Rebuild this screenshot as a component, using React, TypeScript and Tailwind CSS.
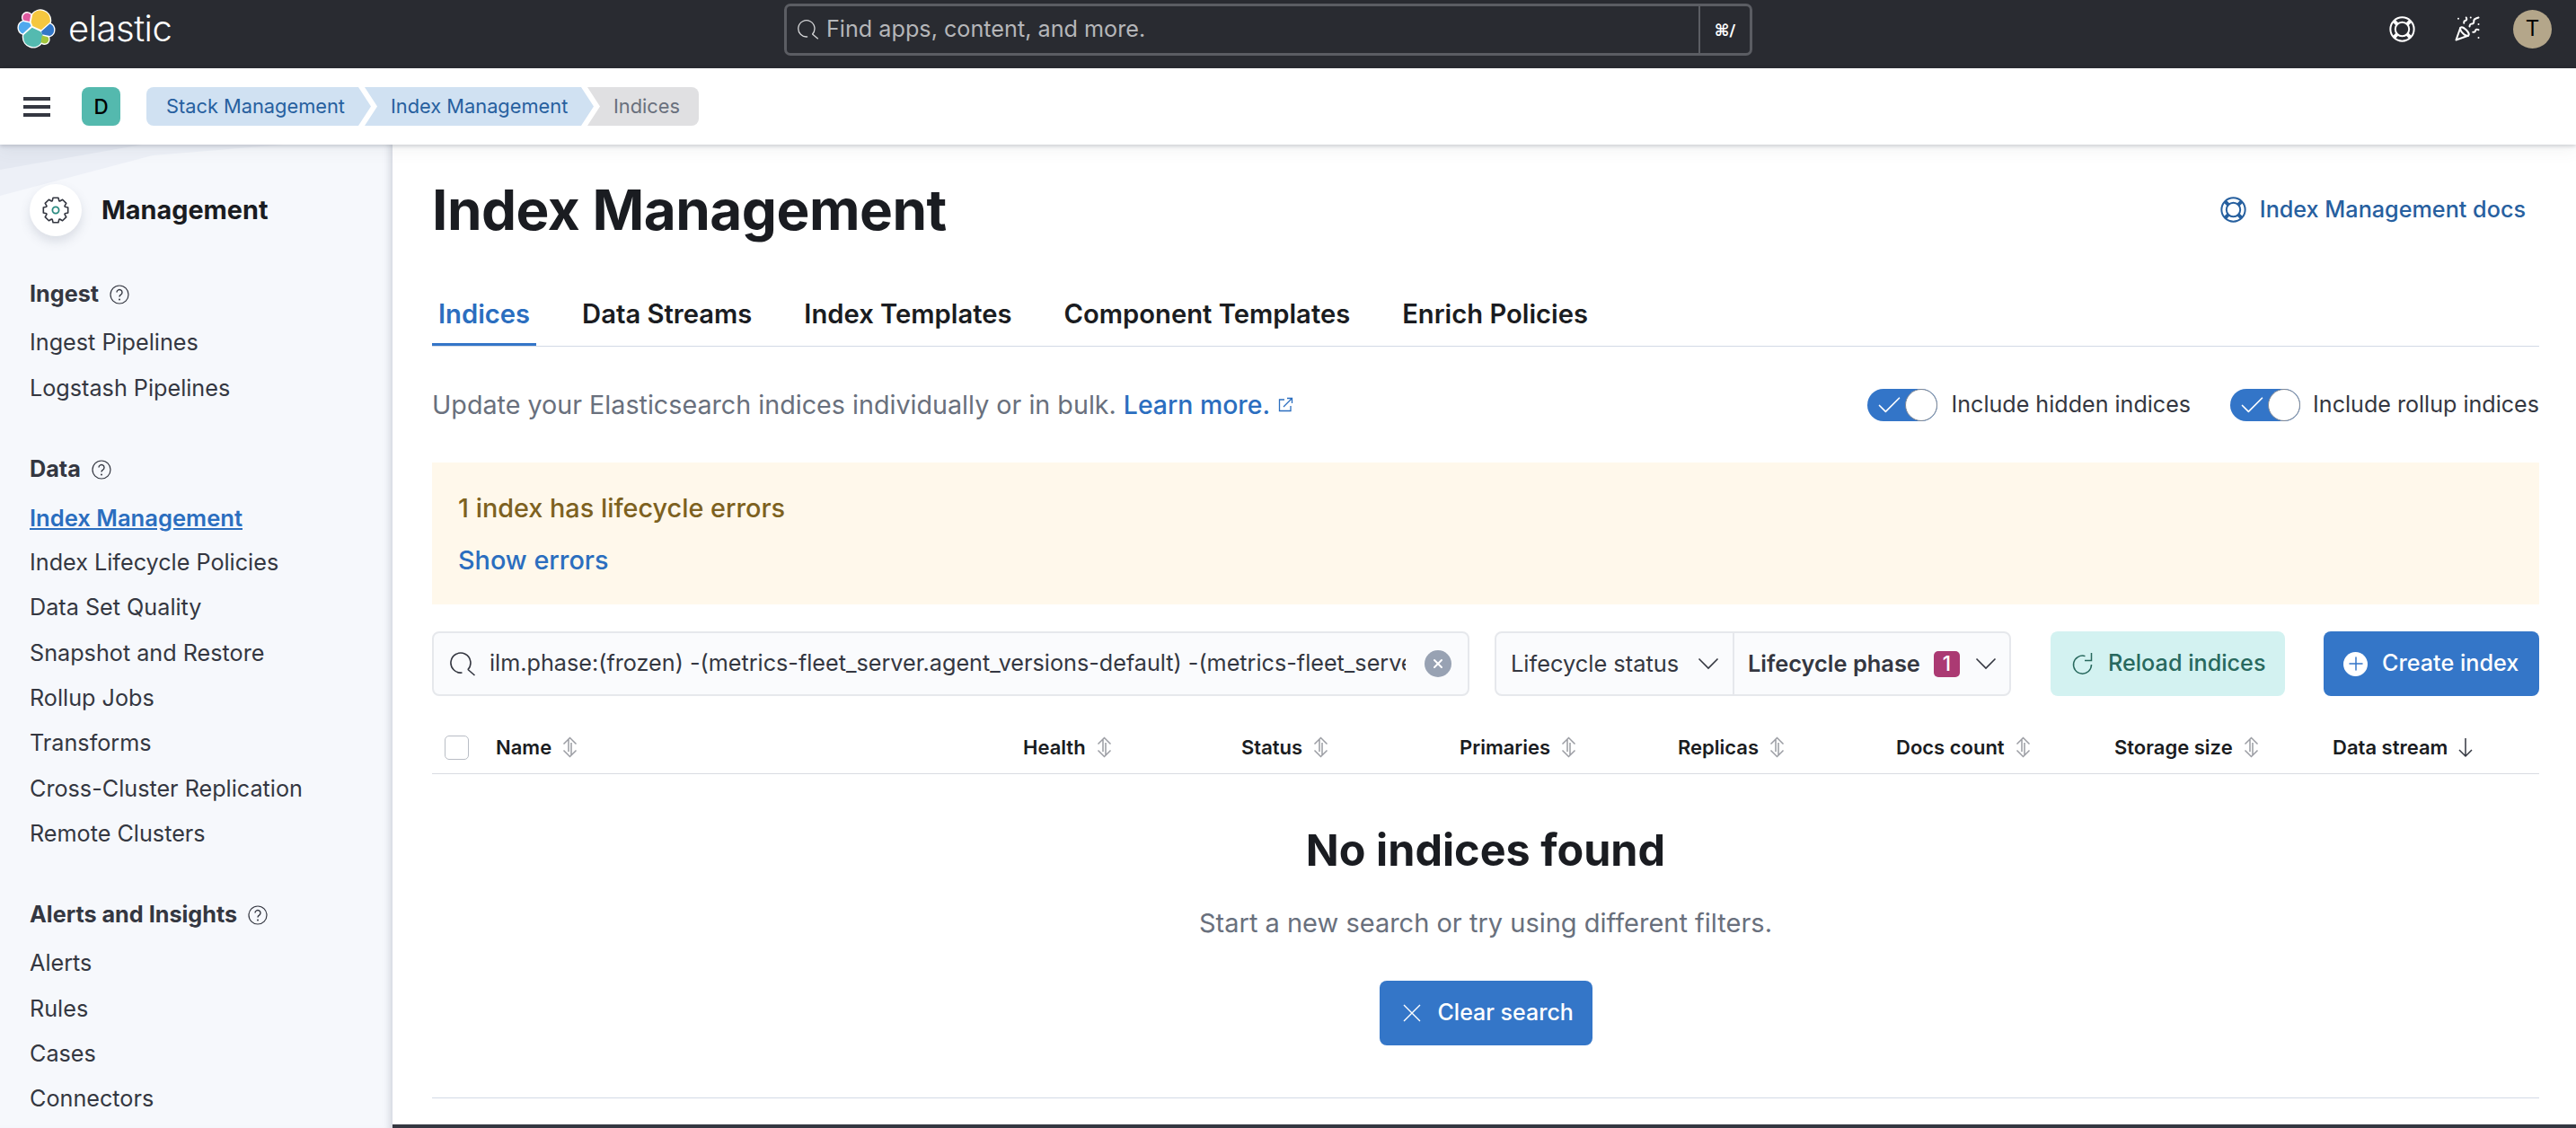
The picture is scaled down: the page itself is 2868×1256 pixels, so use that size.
import { Check, PartyPopper, Plus, X } from "lucide-react";

const inter = "font-['Inter',sans-serif]";

function ElasticLogo() {
	const parts = [
		{ c: "#f5c73f", d: "M12.57 13.735l7.01 3.196 7.073-6.197a7.877 7.877 0 0 0 .152-1.56 7.918 7.918 0 0 0-14.297-4.7l-1.177 6.09 1.239 3.17z" },
		{ c: "#54bab0", d: "M5.32 21.151a7.95 7.95 0 0 0-.157 1.577 7.936 7.936 0 0 0 14.38 4.62l1.165-6.08-1.557-2.977-7.037-3.207-6.794 6.067z" },
		{ c: "#de5a9f", d: "M5.278 9.032l4.8 1.134 1.05-5.457a3.38 3.38 0 0 0-5.85 4.323z" },
		{ c: "#4fa9ee", d: "M4.862 10.176c-2.11.699-3.574 2.72-3.574 4.947 0 2.17 1.34 4.107 3.352 4.872l6.738-6.09-1.237-2.64-5.279-1.089z" },
		{ c: "#a3c63d", d: "M20.24 27.333a3.35 3.35 0 0 0 2.038.689 3.38 3.38 0 0 0 3.377-3.379c0-.747-.243-1.44-.655-2.004l-4.79-1.12-.97 5.814z" },
		{ c: "#3277c8", d: "M21.216 20.638l5.274 1.23a5.23 5.23 0 0 0 3.416-4.904 5.24 5.24 0 0 0-3.37-4.891l-6.897 6.042.577 2.523z" },
	];
	return (
		<svg viewBox="0 0 32 32" className="h-[44px] w-[44px] shrink-0">
			{parts.map((p) => (
				<path key={p.c} d={p.d} fill="#fff" stroke="#fff" strokeWidth="2" strokeLinejoin="round" />
			))}
			{parts.map((p) => (
				<path key={p.c} d={p.d} fill={p.c} />
			))}
		</svg>
	);
}

function LifeRing({ className }: { className?: string }) {
	return (
		<svg viewBox="0 0 32 32" fill="none" stroke="currentColor" className={className}>
			<circle cx="16" cy="16" r="14.5" strokeWidth="2.2" />
			<circle cx="16" cy="16" r="8.5" strokeWidth="2.2" />
			<path d="M5.8 5.8l4.2 4.2M26.2 5.8L22 10M5.8 26.2l4.2-4.2M26.2 26.2L22 22" strokeWidth="4.4" />
		</svg>
	);
}

function SearchIcon({ className }: { className?: string }) {
	return (
		<svg viewBox="0 0 29 27" fill="none" stroke="currentColor" strokeWidth="1.6" className={className}>
			<path d="M19.8 19.8A11 11 0 1 0 13.5 23" />
			<path d="M20 19.5l7.5 6.5" />
		</svg>
	);
}

function Gear() {
	const pts: string[] = [];
	const teeth = 8;
	for (let i = 0; i < teeth; i++) {
		const a = (i / teeth) * Math.PI * 2 - Math.PI / 2;
		const step = (Math.PI * 2) / teeth;
		[
			[11, -0.5],
			[14, -0.3],
			[14, 0.3],
			[11, 0.5],
		].forEach(([r, f]) => {
			const t = a + f * step * 0.9;
			pts.push(`${(16 + r * Math.cos(t)).toFixed(2)},${(16 + r * Math.sin(t)).toFixed(2)}`);
		});
	}
	return (
		<svg viewBox="0 0 32 32" fill="none" className="h-[32px] w-[32px]">
			<polygon points={pts.join(" ")} stroke="#343741" strokeWidth="1.6" strokeLinejoin="round" />
			<circle cx="16" cy="16" r="3.6" stroke="#2a8a80" strokeWidth="1.8" />
		</svg>
	);
}

function Help() {
	return (
		<svg viewBox="0 0 22 22" fill="none" className="h-[22px] w-[22px] shrink-0">
			<circle cx="11" cy="11" r="10" stroke="#343741" strokeWidth="1.2" />
			<path d="M8 8.6a3 3 0 1 1 4.6 2.5c-1 .6-1.6 1.2-1.6 2.5" stroke="#343741" strokeWidth="1.4" />
			<circle cx="11" cy="16.4" r="1" fill="#343741" />
		</svg>
	);
}

function SortIcon() {
	return (
		<svg viewBox="0 0 17 24" fill="none" stroke="#9b9da3" strokeWidth="1.5" className="h-[24px] w-[17px] shrink-0">
			<path d="M1.5 8.5L8.5 1.5l7 7M7 3v14" />
			<path d="M1.5 15.5l7 7 7-7M10 7v14" />
		</svg>
	);
}

function Chevron() {
	return (
		<svg viewBox="0 0 24 14" fill="none" stroke="#343741" strokeWidth="1.6" className="h-[14px] w-[24px] shrink-0">
			<path d="M1.5 1.5L12 12 22.5 1.5" />
		</svg>
	);
}

function Toggle() {
	return (
		<div className="relative flex h-[36px] w-[78px] shrink-0 items-center justify-between rounded-full bg-[#3375c8]">
			<Check className="ml-[8px] h-[33px] w-[33px] text-white" strokeWidth={1.2} />
			<div className="h-[36px] w-[36px] rounded-full border-[1.5px] border-[#7f8794] bg-white" />
		</div>
	);
}

function SideItem({ label, active }: { label: string; active?: boolean }) {
	return (
		<a
			className={
				active
					? "flex h-[50.3px] items-center text-[25.6px] font-semibold text-[#2b6ebf] underline"
					: "flex h-[50.3px] items-center text-[25.2px] text-[#343741]"
			}
		>
			{label}
		</a>
	);
}

function SideSection({ title, items, active }: { title: string; items: string[]; active?: string }) {
	return (
		<div className="mb-[40px]">
			<div className="mb-[4px] flex h-[50px] items-center gap-[12px] text-[25.2px] font-bold text-[#343741]">
				{title}
				<Help />
			</div>
			{items.map((i) => (
				<SideItem key={i} label={i} active={i === active} />
			))}
		</div>
	);
}

function Sidebar() {
	return (
		<aside className="relative w-[437px] shrink-0 overflow-hidden bg-[#f6f8fc] pl-[33px] shadow-[inset_-9px_0_8px_-7px_rgba(120,130,150,0.35)]">
			<svg className="absolute left-0 top-0 h-[60px] w-[320px]" viewBox="0 0 320 60">
				<polygon points="0,0 316,0 170,12 0,57" fill="#edf0f7" />
				<polygon points="0,0 158,0 0,28" fill="#e4e8f1" />
			</svg>
			<div className="relative flex h-[142px] items-start pt-[44px]">
				<div className="flex h-[58px] w-[58px] items-center justify-center rounded-full bg-white shadow-[0_6px_12px_rgba(90,100,120,0.18)]">
					<Gear />
				</div>
				<h2 className="ml-[22px] h-[58px] text-[28.8px] font-bold leading-[58px] text-[#1a1c21]">Management</h2>
			</div>
			<div className="relative">
				<SideSection title="Ingest" items={["Ingest Pipelines", "Logstash Pipelines"]} />
				<SideSection
					title="Data"
					active="Index Management"
					items={[
						"Index Management",
						"Index Lifecycle Policies",
						"Data Set Quality",
						"Snapshot and Restore",
						"Rollup Jobs",
						"Transforms",
						"Cross-Cluster Replication",
						"Remote Clusters",
					]}
				/>
				<SideSection title="Alerts and Insights" items={["Alerts", "Rules", "Cases", "Connectors"]} />
			</div>
		</aside>
	);
}

const columns = ["Health", "Status", "Primaries", "Replicas", "Docs count", "Storage size"];

function TableHead() {
	return (
		<div className="flex h-[59px] items-center border-b border-[#d9dce2] text-[22px] font-semibold text-[#1a1c21]">
			<div className="flex w-[71px] shrink-0 justify-start pl-[14px]">
				<div className="h-[27px] w-[27px] rounded-[5px] border border-[#b9bdc5] bg-white" />
			</div>
			<div className="flex w-[574px] shrink-0 items-center gap-[12px]">
				Name
				<SortIcon />
			</div>
			{columns.map((c) => (
				<div key={c} className="flex w-[243px] shrink-0 items-center gap-[12px] pl-[13px]">
					{c}
					<SortIcon />
				</div>
			))}
			<div className="flex items-center gap-[10px] pl-[13px]">
				Data stream
				<svg viewBox="0 0 20 24" fill="none" stroke="#343741" strokeWidth="1.5" className="h-[24px] w-[20px]">
					<path d="M10 2v20M3 15l7 7 7-7" />
				</svg>
			</div>
		</div>
	);
}

export default function App() {
	return (
		<div className={`flex h-[1256px] w-[2868px] flex-col overflow-hidden bg-white ${inter}`}>
			<header className="flex h-[76px] shrink-0 items-center bg-[#292b31] pb-[12px]">
				<div className="flex w-[873px] shrink-0 items-center pl-[19px]">
					<ElasticLogo />
					<span className="ml-[13px] text-[40px] font-light tracking-[-0.5px] text-white">elastic</span>
				</div>
				<div className="mt-[2px] flex h-[58px] w-[1078px] shrink-0 items-stretch rounded-[7px] border-[3px] border-[#5b5d63]">
					<div className="flex flex-1 items-center gap-[8px] pl-[12px] text-[25.2px] text-[#b5b6b9]">
						<SearchIcon className="h-[24px] w-[24px] text-[#d5d6d8]" />
						Find apps, content, and more.
					</div>
					<div className="flex w-[57px] items-center justify-center border-l-2 border-[#5b5d63] font-['DejaVu_Sans',sans-serif] text-[18px] font-bold text-white">
						⌘/
					</div>
				</div>
				<div className="flex flex-1 items-center justify-end pr-[27px] text-white">
					<LifeRing className="h-[29px] w-[29px]" />
					<PartyPopper className="ml-[43px] h-[30px] w-[30px]" strokeWidth={1.6} />
					<div className="ml-[36px] flex h-[43px] w-[43px] items-center justify-center rounded-full bg-[#b4a68a] text-[24px] text-black">
						T
					</div>
				</div>
			</header>

			<div className="relative z-10 flex h-[85px] shrink-0 items-center bg-white pl-[26px] shadow-[0_2px_4px_rgba(90,95,110,0.25),0_8px_16px_rgba(90,95,110,0.06)]">
				<div className="flex w-[30px] flex-col gap-[5px]">
					<div className="h-[4px] bg-[#343741]" />
					<div className="h-[4px] bg-[#343741]" />
					<div className="h-[4px] bg-[#343741]" />
				</div>
				<div className="ml-[35px] flex h-[43px] w-[43px] items-center justify-center rounded-[8px] bg-[#54b9ae] text-[22.4px] font-medium text-black">
					D
				</div>
				<nav className="ml-[29px] flex h-[43px] text-[21.8px]">
					<a className="flex w-[250px] items-center rounded-l-[8px] bg-[#d0e1f2] pl-[22px] text-[#27609f] [clip-path:polygon(0_0,236px_0,250px_50%,236px_100%,0_100%)]">
						Stack Management
					</a>
					<a className="-ml-[7px] flex w-[255px] items-center bg-[#d0e1f2] pl-[29px] text-[#27609f] [clip-path:polygon(0_0,241px_0,255px_50%,241px_100%,0_100%,14px_50%)]">
						Index Management
					</a>
					<span className="-ml-[7px] flex w-[124px] items-center rounded-r-[8px] bg-[#e0e0e2] pl-[29px] text-[#69707d] [clip-path:polygon(0_0,100%_0,100%_100%,0_100%,14px_50%)]">
						Indices
					</span>
				</nav>
			</div>

			<div className="flex min-h-0 flex-1">
				<Sidebar />
				<main className="flex min-w-0 flex-1 flex-col">
					<div className="flex-1 pl-[44px] pr-[41px]">
						<div className="flex h-[146px] items-center justify-between">
							<h1 className="text-[62px] font-bold leading-none tracking-[-0.5px] text-[#1a1c21]">Index Management</h1>
							<a className="mr-[15px] flex items-center gap-[15px] text-[25.2px] font-medium text-[#27609f]">
								<LifeRing className="h-[29px] w-[29px]" />
								Index Management docs
							</a>
						</div>

						<div className="flex h-[79px] gap-[44px] border-b border-[#d3dae6] text-[29.2px] font-semibold text-[#1a1c21]">
							<a className="h-[78px] border-b-[3px] border-[#3375c8] px-[7px] pt-[21px] text-[#2b6ebf]">Indices</a>
							<a className="h-[78px] px-[7px] pt-[21px]">Data Streams</a>
							<a className="h-[78px] px-[7px] pt-[21px]">Index Templates</a>
							<a className="h-[78px] px-[7px] pt-[21px]">Component Templates</a>
							<a className="h-[78px] px-[7px] pt-[21px]">Enrich Policies</a>
						</div>

						<div className="mt-[47px] flex h-[36px] items-center justify-between">
							<p className="flex items-center text-[28.7px] text-[#69707d]">
								Update your Elasticsearch indices individually or in bulk.
								<a className="ml-[8px] flex items-center gap-[8px] text-[28.4px] font-medium text-[#2b6ebf]">
									Learn more.
									<svg viewBox="0 0 18 18" fill="none" stroke="currentColor" strokeWidth="1.3" className="h-[18px] w-[18px]">
										<path d="M8 3H2.5v12.5H15V10M7 11L16 2M11 1.5h5.5V7" />
									</svg>
								</a>
							</p>
							<div className="flex items-center text-[25.1px] text-[#343741]">
								<Toggle />
								<span className="ml-[15px] mr-[44px]">Include hidden indices</span>
								<Toggle />
								<span className="ml-[14px]">Include rollup indices</span>
							</div>
						</div>

						<div className="mt-[46px] flex h-[158px] flex-col bg-[#fff8eb] px-[29px] pt-[30px] text-[28.8px] font-medium leading-[42px]">
							<div className="text-[#7d6120]">1 index has lifecycle errors</div>
							<a className="mt-[16px] text-[#2b6ebf]">Show errors</a>
						</div>

						<div className="mt-[30px] flex h-[72px] items-stretch text-[25.4px]">
							<div className="flex w-[1155px] shrink-0 items-center rounded-[8px] border-2 border-[#e6e8ec] bg-[#fafbfd] pl-[18px] pr-[18px]">
								<SearchIcon className="h-[27px] w-[29px] shrink-0 text-[#343741]" />
								<input
									readOnly
									value="ilm.phase:(frozen) -(metrics-fleet_server.agent_versions-default) -(metrics-fleet_server.agent_status-default)"
									className="ml-[15px] min-w-0 flex-1 bg-transparent text-[25.2px] text-[#343741] outline-none"
								/>
								<div className="ml-[21px] flex h-[30px] w-[30px] shrink-0 items-center justify-center rounded-full bg-[#98a2b3]">
									<X className="h-[16px] w-[16px] text-white" strokeWidth={3} />
								</div>
							</div>
							<div className="ml-[28px] flex w-[575px] shrink-0 rounded-[8px] border-2 border-[#e6e8ec] bg-[#fafbfd] text-[#343741]">
								<div className="flex w-[265px] shrink-0 items-center border-r-2 border-[#e6e8ec] pl-[16px]">
									Lifecycle status
									<span className="ml-[21px]">
										<Chevron />
									</span>
								</div>
								<div className="flex flex-1 items-center pl-[15px] font-semibold">
									Lifecycle phase
									<span className="ml-[15px] flex h-[29px] w-[29px] items-center justify-center rounded-[5px] bg-[#ab3a73] text-[22.4px] font-medium text-white">
										1
									</span>
									<span className="ml-[17px]">
										<Chevron />
									</span>
								</div>
							</div>
							<button className="ml-[44px] flex w-[261px] shrink-0 items-center rounded-[8px] bg-[#d3f2f1] pl-[23px] text-[25.2px] font-medium text-[#28695e]">
								<svg viewBox="0 0 24 26" fill="none" stroke="currentColor" strokeWidth="1.5" className="mr-[17px] h-[26px] w-[24px]">
									<path d="M15.5 4.6A10 10 0 1 0 22.5 14" />
									<path d="M22.5 1v8.5H15" />
								</svg>
								Reload indices
							</button>
							<button className="ml-[43px] flex flex-1 items-center rounded-[8px] bg-[#3476c8] pl-[22px] text-[25.2px] font-medium text-white">
								<span className="mr-[16px] flex h-[27px] w-[27px] items-center justify-center rounded-full bg-white">
									<Plus className="h-[24px] w-[24px] text-[#3476c8]" strokeWidth={1.5} />
								</span>
								Create index
							</button>
						</div>

						<div className="mt-[28px]">
							<TableHead />
						</div>

						<div className="flex flex-col items-center border-b border-[#d3dae6] pb-[58px] pt-[55px]">
							<h3 className="text-[48.5px] font-bold leading-[60px] text-[#1a1c21]">No indices found</h3>
							<p className="mt-[31px] text-[29px] leading-[40px] text-[#69707d]">Start a new search or try using different filters.</p>
							<button className="mt-[44px] flex h-[72px] w-[237px] items-center rounded-[8px] bg-[#3476c8] pl-[26px] text-[25px] font-medium text-white">
								<svg viewBox="0 0 20 20" fill="none" stroke="currentColor" strokeWidth="1.4" className="mr-[19px] h-[20px] w-[20px]">
									<path d="M1 1l18 18M19 1L1 19" />
								</svg>
								Clear search
							</button>
						</div>
					</div>
					<div className="h-[4px] shrink-0 bg-[#343741]" />
				</main>
			</div>
		</div>
	);
}
